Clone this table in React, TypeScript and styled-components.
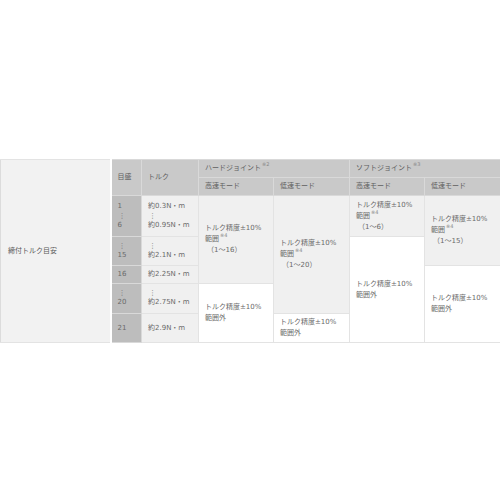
import styled, { createGlobalStyle } from "styled-components";

const GlobalStyle = createGlobalStyle`
  html, body {
    margin: 0;
    padding: 0;
    background: #fff;
    font-family: "DejaVu Sans", "Noto Sans CJK JP", sans-serif;
  }
`;

const Page = styled.div`
  padding-top: 159px;
  width: 500px;
`;

const Table = styled.table`
  width: 500px;
  border-collapse: collapse;
  table-layout: fixed;
  font-size: 7px;
  line-height: 11px;
  color: #6a6a6a;
`;

const Cell = styled.td<{ $tone?: "head" | "scale" | "light" | "white" | "side" }>`
  padding: 0 6px;
  vertical-align: middle;
  text-align: left;
  border: 1px solid
    ${(p) => (p.$tone === "head" || p.$tone === "scale" ? "#d9d9d9" : "#e3e3e3")};
  background: ${(p) =>
    p.$tone === "head"
      ? "#c9c9c9"
      : p.$tone === "scale"
      ? "#bdbdbd"
      : p.$tone === "white"
      ? "#ffffff"
      : p.$tone === "side"
      ? "#f2f2f2"
      : "#f0f0f0"};
  color: ${(p) => (p.$tone === "head" ? "#606060" : "#6a6a6a")};
  white-space: nowrap;
`;

const Side = styled(Cell)`
  padding-left: 7px;
  color: #5a5a5a;
  border-left: 1px solid #dcdcdc;
  border-right: 2px solid #fff;
`;

const Row = styled.tr<{ $h: number }>`
  height: ${(p) => p.$h}px;
`;

const Note = styled.sup`
  font-size: 5px;
  line-height: 0;
  vertical-align: 4px;
  margin-left: 1px;
  color: #888;
`;

const Dots = styled.span`
  display: block;
  font-size: 7px;
  line-height: 8px;
  padding-left: 1px;
`;

const Paren = styled.span`
  display: block;
  padding-left: 2px;
`;

const Line = styled.span`
  display: block;
`;

const Range = ({ to, out }: { to?: string; out?: boolean }) => (
  <>
    <Line>トルク精度±10%</Line>
    {out ? (
      <Line>範囲外</Line>
    ) : (
      <>
        <Line>
          範囲<Note>※4</Note>
        </Line>
        <Paren>（1〜{to}）</Paren>
      </>
    )}
  </>
);

export default function App() {
  return (
    <Page>
      <GlobalStyle />
      <Table>
        <colgroup>
          <col style={{ width: 110 }} />
          <col style={{ width: 31 }} />
          <col style={{ width: 57 }} />
          <col style={{ width: 75 }} />
          <col style={{ width: 76 }} />
          <col style={{ width: 75 }} />
          <col style={{ width: 76 }} />
        </colgroup>
        <tbody>
          <Row $h={18}>
            <Side $tone="side" rowSpan={7}>
              締付トルク目安
            </Side>
            <Cell $tone="head" rowSpan={2}>
              目盛
            </Cell>
            <Cell $tone="head" rowSpan={2}>
              トルク
            </Cell>
            <Cell $tone="head" colSpan={2}>
              ハードジョイント<Note>※2</Note>
            </Cell>
            <Cell $tone="head" colSpan={2}>
              ソフトジョイント<Note>※3</Note>
            </Cell>
          </Row>
          <Row $h={18}>
            <Cell $tone="head">高速モード</Cell>
            <Cell $tone="head">低速モード</Cell>
            <Cell $tone="head">高速モード</Cell>
            <Cell $tone="head">低速モード</Cell>
          </Row>
          <Row $h={41}>
            <Cell $tone="scale">
              <Line>1</Line>
              <Dots>⋮</Dots>
              <Line>6</Line>
            </Cell>
            <Cell $tone="light">
              <Line>約0.3N・m</Line>
              <Dots>⋮</Dots>
              <Line>約0.95N・m</Line>
            </Cell>
            <Cell $tone="light" rowSpan={3}>
              <Range to="16" />
            </Cell>
            <Cell $tone="light" rowSpan={4}>
              <Range to="20" />
            </Cell>
            <Cell $tone="light">
              <Range to="6" />
            </Cell>
            <Cell $tone="light" rowSpan={2}>
              <Range to="15" />
            </Cell>
          </Row>
          <Row $h={29}>
            <Cell $tone="scale">
              <Dots>⋮</Dots>
              <Line>15</Line>
            </Cell>
            <Cell $tone="light">
              <Dots>⋮</Dots>
              <Line>約2.1N・m</Line>
            </Cell>
            <Cell $tone="white" rowSpan={5}>
              <Range out />
            </Cell>
          </Row>
          <Row $h={18}>
            <Cell $tone="scale">16</Cell>
            <Cell $tone="light">約2.25N・m</Cell>
            <Cell $tone="white" rowSpan={3}>
              <Range out />
            </Cell>
          </Row>
          <Row $h={30}>
            <Cell $tone="scale">
              <Dots>⋮</Dots>
              <Line>20</Line>
            </Cell>
            <Cell $tone="light">
              <Dots>⋮</Dots>
              <Line>約2.75N・m</Line>
            </Cell>
            <Cell $tone="white" rowSpan={2}>
              <Range out />
            </Cell>
          </Row>
          <Row $h={29}>
            <Cell $tone="scale">21</Cell>
            <Cell $tone="light">約2.9N・m</Cell>
            <Cell $tone="white">
              <Range out />
            </Cell>
          </Row>
        </tbody>
      </Table>
    </Page>
  );
}
